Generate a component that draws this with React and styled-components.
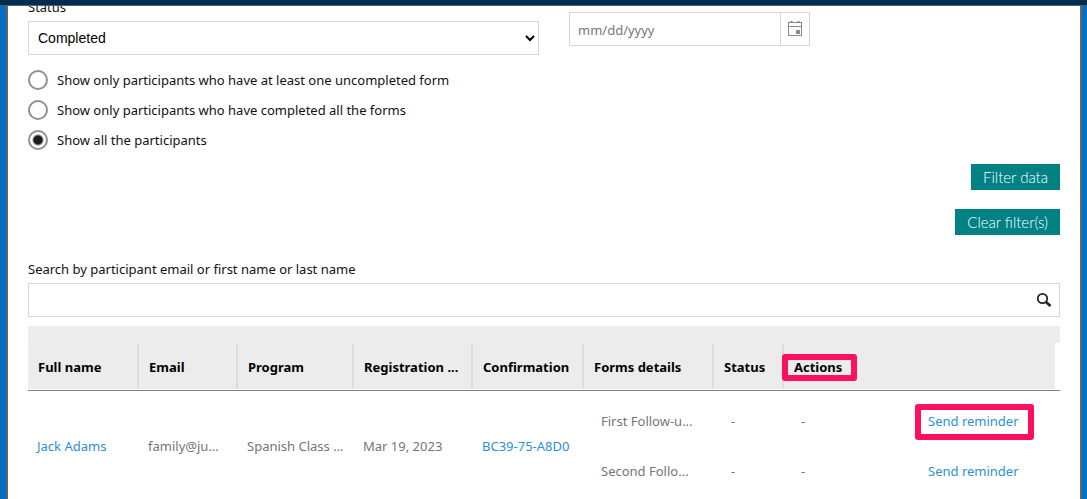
import React, { useState } from 'react';
import styled, { createGlobalStyle, css } from 'styled-components';

const participant = {
    name: 'Jack Adams',
    email: 'family@ju...',
    program: 'Spanish Class ...',
    date: 'Mar 19, 2023',
    confirmation: 'BC39-75-A8D0',
    forms: [
        { id: 1, title: 'First Follow-u...', highlight: true },
        { id: 2, title: 'Second Follo...', highlight: false },
    ],
};

const completionOptions = [
    { value: 'uncompleted', label: 'Show only participants who have at least one uncompleted form' },
    { value: 'completed', label: 'Show only participants who have completed all the forms' },
    { value: 'all', label: 'Show all the participants' },
];

const columns = ['Full name', 'Email', 'Program', 'Registration ...', 'Confirmation', 'Forms details', 'Status'];
const columnWidths = [111, 99, 116, 119, 111, 130, 70, 135];

function CalendarIcon() {
    return (
        <svg width="16" height="16" viewBox="0 0 16 16" fill="none" stroke="#8a8a8a" aria-hidden="true">
            <path d="M1 2.5h14M1.5 2v13M14.5 2v13M1 15.5h14M1 6.5h14" />
            <path d="M4.5 1v2M11.5 1v2" strokeWidth="2" />
            <path d="M9 10h4v4H9z" fill="#8a8a8a" stroke="none" />
        </svg>
    );
}

function SearchIcon() {
    return (
        <svg width="16" height="16" viewBox="0 0 16 16" fill="none" stroke="#222" aria-hidden="true">
            <circle cx="6.5" cy="6.5" r="4.7" strokeWidth="1.8" />
            <path d="M10 10l4.5 4" strokeWidth="2.6" />
        </svg>
    );
}

export default function App() {
    const [status, setStatus] = useState('Completed');
    const [completion, setCompletion] = useState('all');
    const [date, setDate] = useState('');
    const [search, setSearch] = useState('');

    return (
        <>
            <GlobalStyle />
            <Page>
                <TopBar />
                <Panel>
                    <Filters>
                        <StatusField>
                            <StatusLabel htmlFor="status">Status</StatusLabel>
                            <Select id="status" value={status} onChange={(e) => setStatus(e.target.value)}>
                                <option>Completed</option>
                                <option>Not completed</option>
                            </Select>
                        </StatusField>
                        <DateField>
                            <DateInput
                                aria-label="Date"
                                placeholder="mm/dd/yyyy"
                                value={date}
                                onChange={(e) => setDate(e.target.value)}
                            />
                            <DateButton type="button" aria-label="Open calendar">
                                <CalendarIcon />
                            </DateButton>
                        </DateField>
                    </Filters>
                    <RadioGroup>
                        {completionOptions.map((option) => (
                            <RadioLabel key={option.value}>
                                <Radio
                                    type="radio"
                                    name="completion"
                                    checked={completion === option.value}
                                    onChange={() => setCompletion(option.value)}
                                />
                                {option.label}
                            </RadioLabel>
                        ))}
                    </RadioGroup>
                    <Buttons>
                        <FilterButton type="button">Filter data</FilterButton>
                        <FilterButton type="button">Clear filter(s)</FilterButton>
                    </Buttons>
                    <SearchLabel htmlFor="search">Search by participant email or first name or last name</SearchLabel>
                    <SearchBox>
                        <SearchInput id="search" value={search} onChange={(e) => setSearch(e.target.value)} />
                        <SearchButton type="button" aria-label="Search">
                            <SearchIcon />
                        </SearchButton>
                    </SearchBox>
                    <GridBar />
                    <Table>
                        <colgroup>
                            {columnWidths.map((width, i) => <Col key={i} $width={width} />)}
                            <col />
                            <Col $width={5} />
                        </colgroup>
                        <thead>
                            <tr>
                                {columns.map((title) => (
                                    <Th key={title}><HeadCell $divider>{title}</HeadCell></Th>
                                ))}
                                <Th colSpan={2}>
                                    <HeadCell><Marked $on>Actions</Marked></HeadCell>
                                </Th>
                                <Th />
                            </tr>
                        </thead>
                        <tbody>
                            <SpacerRow><td colSpan={10} /></SpacerRow>
                            {participant.forms.map((form, i) => (
                                <tr key={form.id}>
                                    {i === 0 && (
                                        <>
                                            <Td rowSpan={2}><Link href="#participant">{participant.name}</Link></Td>
                                            <Td rowSpan={2}>{participant.email}</Td>
                                            <Td rowSpan={2}>{participant.program}</Td>
                                            <Td rowSpan={2}>{participant.date}</Td>
                                            <Td rowSpan={2}><Link href="#confirmation">{participant.confirmation}</Link></Td>
                                        </>
                                    )}
                                    <Td $nested>{form.title}</Td>
                                    <Td $nested>-</Td>
                                    <Td $nested>-</Td>
                                    <Td>
                                        <Marked $on={form.highlight} $tall>
                                            <Link href="#reminder">Send reminder</Link>
                                        </Marked>
                                    </Td>
                                    <td />
                                </tr>
                            ))}
                        </tbody>
                    </Table>
                </Panel>
            </Page>
        </>
    );
}

const GlobalStyle = createGlobalStyle`
    *{
        box-sizing: border-box;
    }
    body{
        margin: 0;
        font-family: "Noto Sans", "Open Sans", sans-serif;
        font-size: 13px;
        line-height: 20px;
        color: #111;
    }
    button, input{
        font: inherit;
    }
`;

const Page = styled.div`
    min-height: 100vh;
    padding: 0 5px 0 6px;
    background: #006fc4;
    display: flex;
`;

const TopBar = styled.header`
    position: fixed;
    top: 0;
    left: 0;
    right: 0;
    height: 6px;
    background: #002c4f;
    border-bottom: 1px solid #4a6178;
    z-index: 1;
`;

const Panel = styled.main`
    flex: 1;
    min-width: 0;
    padding: 0 20px;
    background: #fff;
    border: solid #666;
    border-width: 0 2px;
`;

const Filters = styled.div`
    display: flex;
    align-items: flex-start;
    gap: 30px;
`;

const StatusField = styled.div`
    flex: 0 1 511px;
`;

const StatusLabel = styled.label`
    display: block;
    line-height: 14px;
    margin-bottom: 7px;
`;

const Select = styled.select`
    display: block;
    width: 100%;
    height: 34px;
    padding: 0 5px;
    border: 1px solid #d6d6d6;
    border-radius: 0;
    background: #fff;
    color: #000;
    font-family: "Liberation Sans", Arial, sans-serif;
    font-size: 14px;
`;

const DateField = styled.div`
    flex: 0 1 241px;
    display: flex;
    height: 34px;
    margin-top: 12px;
    border: 1px solid #d6d6d6;
`;

const DateInput = styled.input`
    flex: 1;
    min-width: 0;
    padding: 2px 8px 0;
    border: 0;
    &::placeholder{
        color: #777;
    }
`;

const DateButton = styled.button`
    width: 29px;
    padding: 0 0 2px;
    border: 0;
    border-left: 1px solid #d6d6d6;
    background: #fff;
    display: flex;
    align-items: center;
    justify-content: center;
`;

const RadioGroup = styled.div`
    display: flex;
    flex-direction: column;
    align-items: flex-start;
    gap: 10px;
    margin-top: 15px;
`;

const RadioLabel = styled.label`
    display: flex;
    align-items: center;
    gap: 9px;
`;

const Radio = styled.input`
    appearance: none;
    width: 20px;
    height: 20px;
    margin: 0;
    border: 2px solid #919191;
    border-radius: 50%;
    background: #fff;
    &:checked{
        background: radial-gradient(circle, #1c1c1c 4px, #fff 6px);
    }
`;

const Buttons = styled.div`
    display: flex;
    flex-direction: column;
    align-items: flex-end;
    gap: 19px;
    margin-top: 14px;
`;

const FilterButton = styled.button`
    height: 26px;
    padding: 0 12px;
    border: 0;
    background: #008285;
    color: #fff;
    font-family: Lato, sans-serif;
    font-size: 15px;
    font-weight: 300;
`;

const SearchLabel = styled.label`
    display: block;
    margin: 24px 0 4px;
`;

const SearchBox = styled.div`
    display: flex;
    height: 34px;
    border: 1px solid #d6d6d6;
`;

const SearchInput = styled.input`
    flex: 1;
    min-width: 0;
    padding: 0 8px;
    border: 0;
`;

const SearchButton = styled.button`
    width: 30px;
    padding: 0;
    border: 0;
    background: #fff;
    display: flex;
    align-items: center;
    justify-content: center;
`;

const GridBar = styled.div`
    height: 17px;
    margin-top: 9px;
    background: #ededed;
`;

const Table = styled.table`
    width: 100%;
    table-layout: fixed;
    border-spacing: 0;
`;

const Col = styled.col`
    width: ${(props) => props.$width}px;
`;

const Th = styled.th`
    padding: 0 0 1px;
    border-bottom: 1px solid #808080;
    color: #000;
    text-align: left;
    font-weight: 700;
`;

const HeadCell = styled.div`
    height: 46px;
    padding: 14px 0 0 10px;
    background: #ececec;
    white-space: nowrap;
    ${(props) => props.$divider && css`
        border-right: 2px solid #dcdcdc;
    `}
`;

const SpacerRow = styled.tr`
    height: 5px;
    td{
        padding: 0;
    }
`;

const Td = styled.td`
    height: 50px;
    padding: 0 0 0 ${(props) => (props.$nested ? 17 : 9)}px;
    color: #757575;
    white-space: nowrap;
`;

const Link = styled.a`
    color: #2d8fd5;
    text-decoration: none;
`;

// pink frame drawn over the cell text
const Marked = styled.span`
    position: relative;
    display: inline-block;
    ${(props) => props.$on && css`
        &::after{
            content: '';
            position: absolute;
            inset: ${props.$tall ? '-7px -15px -9px -13px' : '-3px -15px -4px -12px'};
            border: 6px solid #ff0f5f;
            border-radius: 3px;
            pointer-events: none;
        }
    `}
`;
